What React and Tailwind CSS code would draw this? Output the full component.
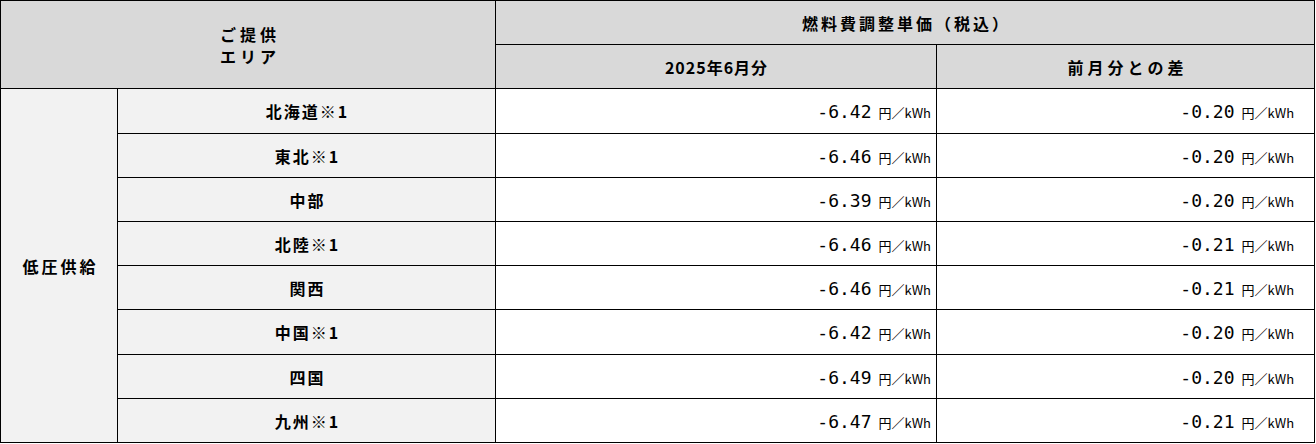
import React from "react";

const rows = [
  ["北海道※1", "-6.42", "-0.20"],
  ["東北※1", "-6.46", "-0.20"],
  ["中部", "-6.39", "-0.20"],
  ["北陸※1", "-6.46", "-0.21"],
  ["関西", "-6.46", "-0.21"],
  ["中国※1", "-6.42", "-0.20"],
  ["四国", "-6.49", "-0.20"],
  ["九州※1", "-6.47", "-0.21"],
];

const jp = { fontFamily: '"Noto Sans CJK JP", "Noto Sans", sans-serif' };

function Value({ v }) {
  return (
    <span className="inline-flex items-baseline">
      <span
        className="text-[18px] leading-none text-black"
        style={{ fontFamily: '"DejaVu Sans Mono", "Liberation Mono", monospace' }}
      >
        {v}
      </span>
      <span className="ml-[7px] text-[13px] leading-none text-black" style={jp}>
        円／kWh
      </span>
    </span>
  );
}

export default function App() {
  const head =
    "border border-black bg-[#d9d9d9] text-[16px] font-bold text-center align-middle";
  const area =
    "border border-black bg-[#f2f2f2] text-[16px] font-bold text-center align-middle";
  return (
    <div className="bg-white w-[1316px] h-[444px]" style={jp}>
      <table className="border-collapse table-fixed w-[1314px] text-black">
        <colgroup>
          <col className="w-[117px]" />
          <col className="w-[378px]" />
          <col className="w-[441px]" />
          <col className="w-[378px]" />
        </colgroup>
        <thead>
          <tr className="h-[44px]">
            <th rowSpan={2} colSpan={2} className={head + " tracking-[4px] pl-[4px]"}>
              <div className="leading-[22px] pt-[1px]">ご提供</div>
              <div className="leading-[22px]">エリア</div>
            </th>
            <th colSpan={2} className={head + " tracking-[3px] pl-[3px]"}>
              燃料費調整単価（税込）
            </th>
          </tr>
          <tr className="h-[44px]">
            <th className={head + " tracking-[1px] pl-[1px]"}>2025年6月分</th>
            <th className={head + " tracking-[4px] pl-[4px]"}>前月分との差</th>
          </tr>
        </thead>
        <tbody>
          {rows.map((r, i) => (
            <tr key={r[0]} className={i === 0 || i === 5 ? "h-[45px]" : "h-[44px]"}>
              {i === 0 && (
                <td rowSpan={8} className={area + " tracking-[3px] pl-[3px]"}>
                  低圧供給
                </td>
              )}
              <td className={area + " tracking-[2px] pl-[2px]"}>{r[0]}</td>
              <td className="border border-black bg-white text-right align-middle pr-[5px]">
                <Value v={r[1]} />
              </td>
              <td className="border border-black bg-white text-right align-middle pr-[20px]">
                <Value v={r[2]} />
              </td>
            </tr>
          ))}
        </tbody>
      </table>
    </div>
  );
}
